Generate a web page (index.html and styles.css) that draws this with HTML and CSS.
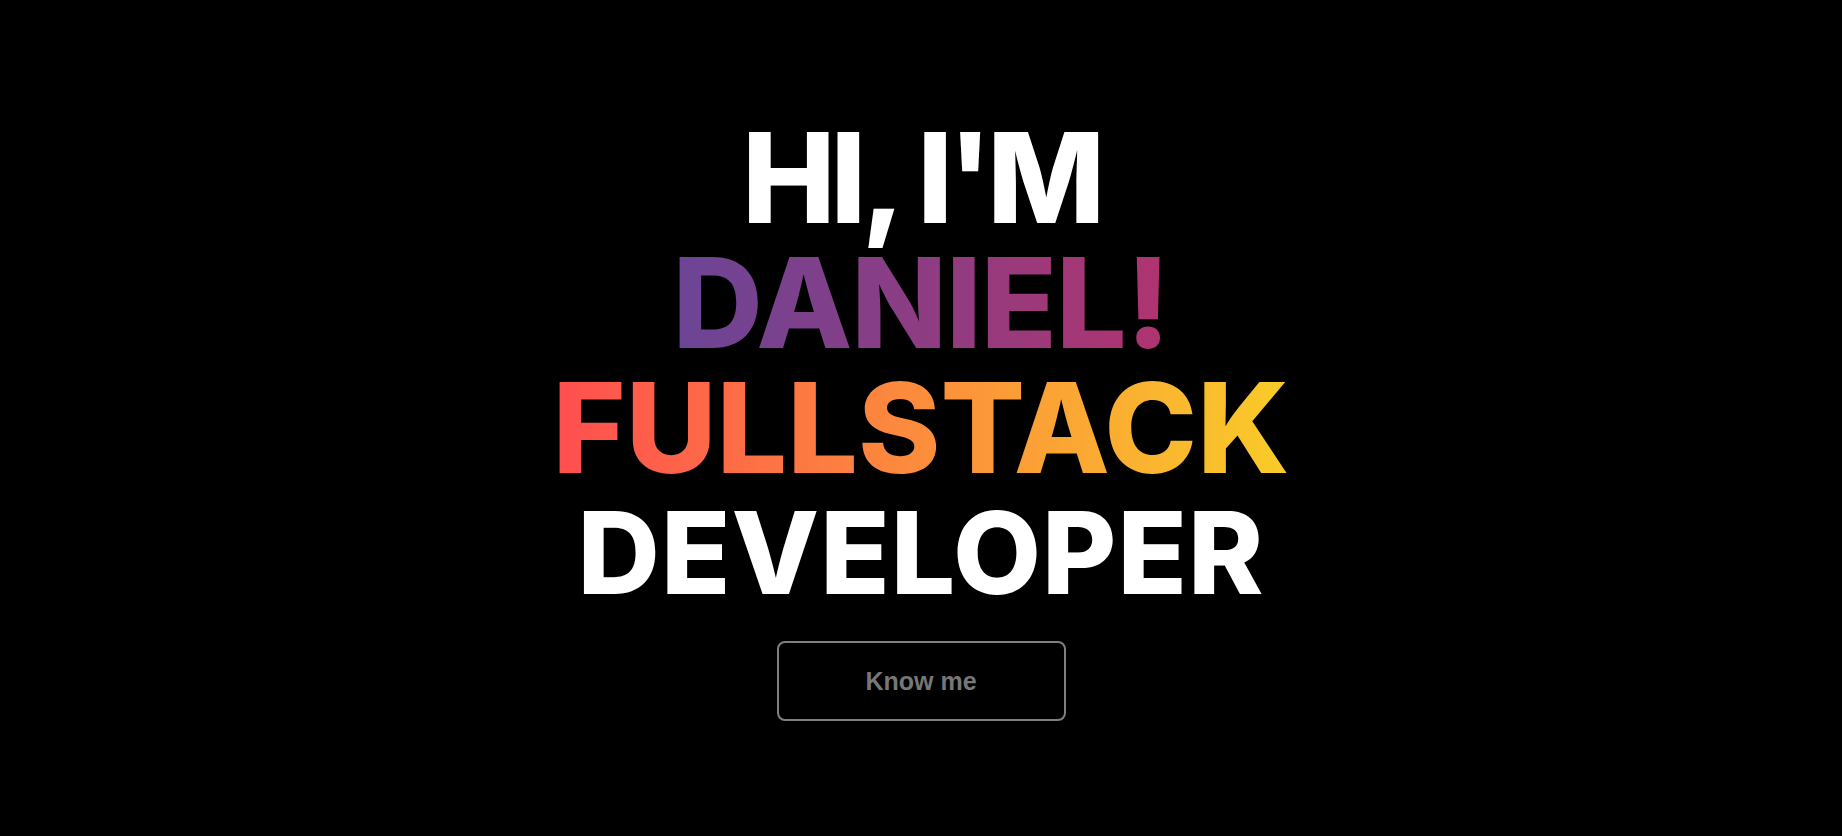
FILE: index.html
```html
<!DOCTYPE html>
<html lang="en">
<head>
<meta charset="utf-8">
<title>Daniel - Fullstack Developer</title>
<link rel="stylesheet" href="styles.css">
</head>
<body>
<main class="hero">
  <h1 class="title">
    <span class="line line-hi">HI, I'M</span>
    <span class="line line-name"><span class="grad grad-purple">DANIEL!</span></span>
    <span class="line line-stack"><span class="grad grad-sun">FULLSTACK</span></span>
    <span class="line line-dev">DEVELOPER</span>
  </h1>
  <button class="btn" type="button">Know me</button>
</main>
</body>
</html>
```
FILE: styles.css
```css
* { box-sizing: border-box; }
html, body {
  margin: 0;
  padding: 0;
  background: #000;
  height: 100%;
}
.hero {
  height: 100vh;
  display: flex;
  flex-direction: column;
  align-items: center;
  justify-content: center;
}
.title {
  margin: 0;
  font-family: "Inter", "Liberation Sans", sans-serif;
  font-weight: 800;
  font-size: 125px;
  line-height: 125px;
  color: #fff;
  text-align: center;
}
.line { display: block; }
.line-hi { letter-spacing: -5px; }
.line-name { letter-spacing: -1px; }
.line-stack { letter-spacing: 0; }
.line-dev { font-size: 114px; letter-spacing: 1px; }
.grad {
  display: inline-block;
  -webkit-background-clip: text;
  background-clip: text;
  color: transparent;
}
.grad-purple { background-image: linear-gradient(to right, #6b4596, #b0346f); }
.grad-sun { background-image: linear-gradient(to right, #ff4e50, #f9cc28); }
.btn {
  margin-top: 26px;
  width: 289px;
  height: 80px;
  background: #000;
  border: 2px solid #7f7f7f;
  border-radius: 8px;
  color: #777;
  font-family: "Liberation Sans", Arial, sans-serif;
  font-weight: 700;
  font-size: 25px;
  cursor: pointer;
}
```
